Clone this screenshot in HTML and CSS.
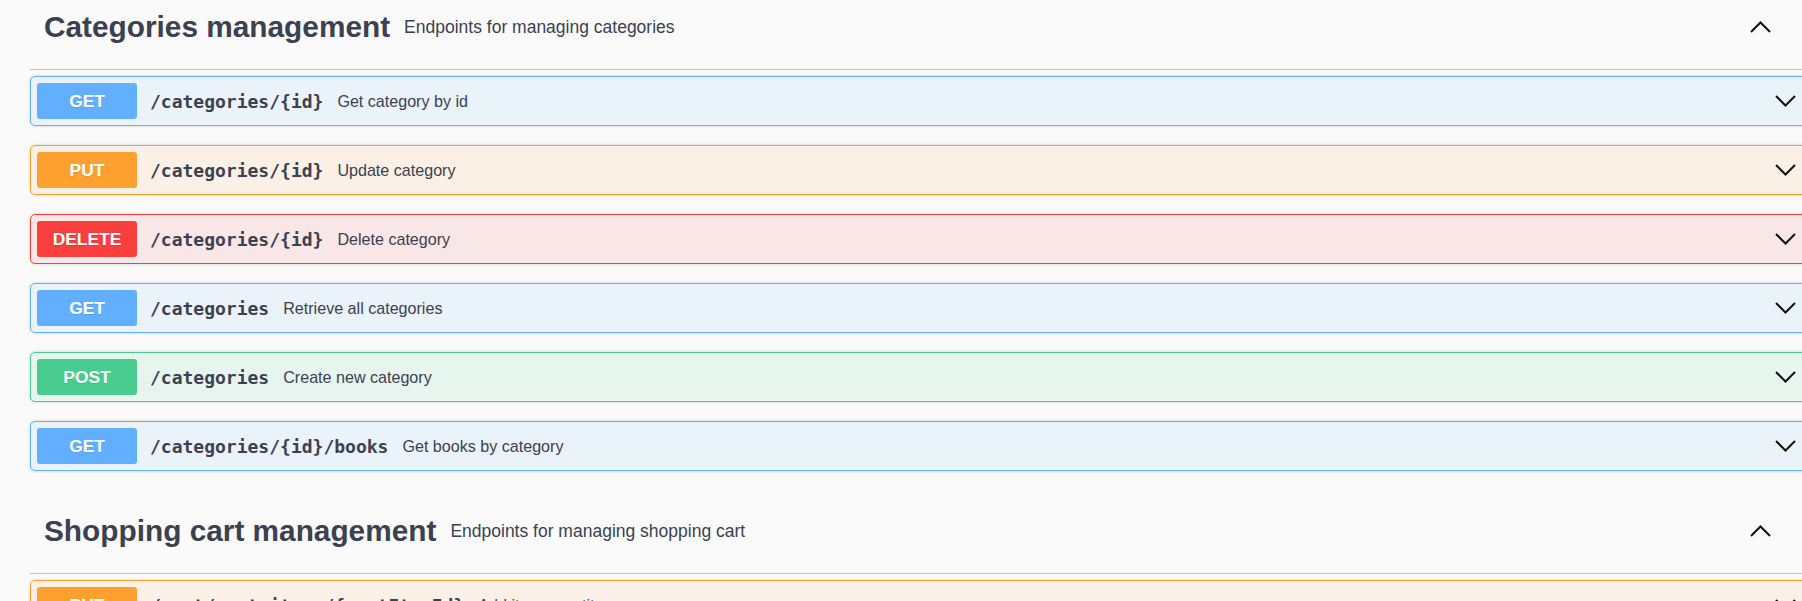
FILE: index.html
```html
<!DOCTYPE html>
<html lang="en">
<head>
<meta charset="utf-8">
<title>Swagger</title>
<link rel="stylesheet" href="styles.css">
</head>
<body>
<div class="page">
  <section class="tag-section">
    <div class="tag-head">
      <h3 class="tag-title">Categories management</h3>
      <span class="tag-desc">Endpoints for managing categories</span>
      <svg class="tag-arrow" width="21" height="12" viewBox="0 0 21 12"><polyline points="1,11 10.5,1.5 20,11" /></svg>
    </div>
    <div class="ops">
      <div class="op op-get">
        <span class="badge">GET</span>
        <span class="path">/categories/{id}</span>
        <span class="op-desc">Get category by id</span>
        <svg class="op-arrow" width="21" height="12" viewBox="0 0 21 12"><polyline points="1,1 10.5,10.5 20,1" /></svg>
      </div>
      <div class="op op-put">
        <span class="badge">PUT</span>
        <span class="path">/categories/{id}</span>
        <span class="op-desc">Update category</span>
        <svg class="op-arrow" width="21" height="12" viewBox="0 0 21 12"><polyline points="1,1 10.5,10.5 20,1" /></svg>
      </div>
      <div class="op op-delete">
        <span class="badge">DELETE</span>
        <span class="path">/categories/{id}</span>
        <span class="op-desc">Delete category</span>
        <svg class="op-arrow" width="21" height="12" viewBox="0 0 21 12"><polyline points="1,1 10.5,10.5 20,1" /></svg>
      </div>
      <div class="op op-get">
        <span class="badge">GET</span>
        <span class="path">/categories</span>
        <span class="op-desc">Retrieve all categories</span>
        <svg class="op-arrow" width="21" height="12" viewBox="0 0 21 12"><polyline points="1,1 10.5,10.5 20,1" /></svg>
      </div>
      <div class="op op-post">
        <span class="badge">POST</span>
        <span class="path">/categories</span>
        <span class="op-desc">Create new category</span>
        <svg class="op-arrow" width="21" height="12" viewBox="0 0 21 12"><polyline points="1,1 10.5,10.5 20,1" /></svg>
      </div>
      <div class="op op-get">
        <span class="badge">GET</span>
        <span class="path">/categories/{id}/books</span>
        <span class="op-desc">Get books by category</span>
        <svg class="op-arrow" width="21" height="12" viewBox="0 0 21 12"><polyline points="1,1 10.5,10.5 20,1" /></svg>
      </div>
    </div>
  </section>
  <section class="tag-section">
    <div class="tag-head">
      <h3 class="tag-title">Shopping cart management</h3>
      <span class="tag-desc">Endpoints for managing shopping cart</span>
      <svg class="tag-arrow" width="21" height="12" viewBox="0 0 21 12"><polyline points="1,11 10.5,1.5 20,11" /></svg>
    </div>
    <div class="ops">
      <div class="op op-put">
        <span class="badge">PUT</span>
        <span class="path">/cart/cart-items/{cartItemId}</span>
        <span class="op-desc">Add item quantity</span>
        <svg class="op-arrow" width="21" height="12" viewBox="0 0 21 12"><polyline points="1,1 10.5,10.5 20,1" /></svg>
      </div>
    </div>
  </section>
</div>
</body>
</html>
```
FILE: styles.css
```css
html, body {
  margin: 0;
  padding: 0;
  overflow: hidden;
  background: #fafafa;
}

body {
  font-family: "Liberation Sans", Arial, sans-serif;
  color: #3b4151;
}

.page {
  width: 1790px;
  margin-left: 30px;
  display: flex;
  flex-direction: column;
  gap: 14px;
}

.tag-head {
  display: flex;
  align-items: center;
  height: 54px;
  padding: 0 49px 15px 14px;
  border-bottom: 1px solid rgba(59, 65, 81, 0.3);
}

.tag-title {
  margin: 0;
  font-size: 29.8px;
  font-weight: 700;
  line-height: 1.15;
}

.tag-desc {
  margin-left: 14px;
  font-size: 17.5px;
  flex: 1;
}

.tag-arrow, .op-arrow {
  fill: none;
  stroke: #111;
  stroke-width: 2;
  flex: none;
}

.ops {
  display: flex;
  flex-direction: column;
  gap: 19px;
  padding: 6px 0 19px;
}

.op {
  display: flex;
  align-items: center;
  height: 36px;
  padding: 6px 23px 6px 6px;
  border: 1px solid;
  border-radius: 5px;
  box-shadow: 0 0 3px rgba(0, 0, 0, 0.19);
}

.badge {
  width: 100px;
  height: 36px;
  border-radius: 3px;
  color: #fff;
  font-size: 17.4px;
  font-weight: 700;
  display: flex;
  align-items: center;
  justify-content: center;
  text-shadow: 0 1px 0 rgba(0, 0, 0, 0.1);
  flex: none;
}

.path {
  margin-left: 13px;
  font-family: "DejaVu Sans Mono", "Liberation Mono", monospace;
  font-weight: 700;
  font-size: 18px;
  color: #3b4151;
}

.op-desc {
  margin-left: 14px;
  font-size: 16.1px;
  flex: 1;
}

.op-get { border-color: #61affe; background: rgba(97, 175, 254, 0.1); }
.op-get .badge { background: #61affe; }

.op-put { border-color: #fca130; background: rgba(252, 161, 48, 0.1); }
.op-put .badge { background: #fca130; }

.op-delete { border-color: #f93e3e; background: rgba(249, 62, 62, 0.1); }
.op-delete .badge { background: #f93e3e; }

.op-post { border-color: #49cc90; background: rgba(73, 204, 144, 0.1); }
.op-post .badge { background: #49cc90; }
```
